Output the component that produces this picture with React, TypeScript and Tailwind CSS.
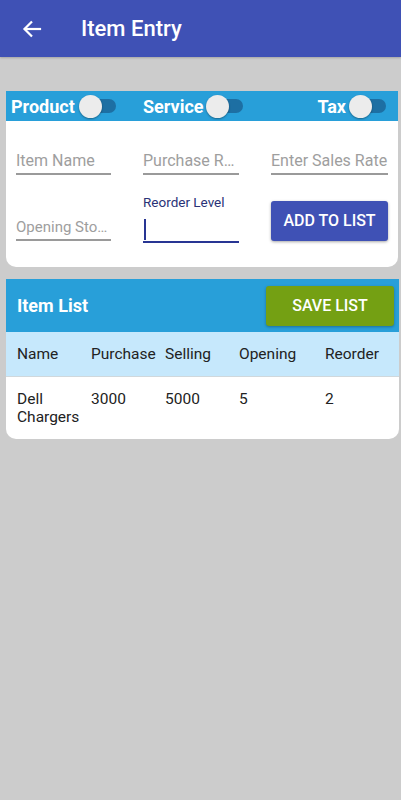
import React from "react";

function Toggle() {
  return (
    <div className="relative w-[37px] h-[23px] shrink-0">
      <div className="absolute left-[4px] right-0 top-[4.5px] h-[14px] rounded-full bg-[#1d6fa3]" />
      <div className="absolute left-0 top-0 w-[23px] h-[23px] rounded-full bg-[#ececec] shadow-[0_1px_2px_rgba(0,0,0,0.35)]" />
    </div>
  );
}

function Field({ text, w, small }: { text: string; w: string; small?: boolean }) {
  return (
    <div className={`${w} flex flex-col`}>
      <div
        className={`h-[24px] flex items-center ${small ? "text-[15px]" : "text-[16px]"} text-[#9e9e9e] leading-none whitespace-nowrap`}
      >
        {text}
      </div>
      <div className="h-[2px] bg-[#9a9a9a]" />
    </div>
  );
}

export default function App() {
  const cols = ["w-[74px]", "w-[74px]", "w-[74px]", "w-[86px]", "w-[60px]"];
  const head = ["Name", "Purchase", "Selling", "Opening", "Reorder"];
  const row = ["Dell\nChargers", "3000", "5000", "5", "2"];
  return (
    <div className="min-h-[800px] bg-[#cccccc]" style={{ fontFamily: "Roboto, 'Noto Sans', sans-serif" }}>
      <div className="h-[57px] bg-[#3f51b5] flex items-center shadow-[0_1px_2px_rgba(0,0,0,0.2)]">
        <svg className="ml-[22px]" width="20" height="20" viewBox="0 0 20 20" fill="none" stroke="white" strokeWidth="2.2" strokeLinecap="square">
          <path d="M18 10H3" />
          <path d="M10 2.5L2.5 10L10 17.5" strokeLinecap="butt" />
        </svg>
        <div className="ml-[39px] text-white text-[22px] font-medium">Item Entry</div>
      </div>

      <div className="ml-[6px] w-[392px] mt-[34px]">
        <div className="h-[30px] bg-[#289fd9] flex items-center pl-[5px]">
          <div className="flex items-center w-[132px]">
            <span className="text-white font-bold text-[18px] mr-[4px]">Product</span>
            <Toggle />
          </div>
          <div className="flex items-center">
            <span className="text-white font-bold text-[18px] mr-[2px]">Service</span>
            <Toggle />
          </div>
          <div className="flex items-center ml-auto mr-[12px]">
            <span className="text-white font-bold text-[18px] mr-[3px]">Tax</span>
            <Toggle />
          </div>
        </div>
        <div className="bg-white rounded-b-[10px] h-[146px] pl-[10px] pt-[28px]">
          <div className="flex gap-[32px]">
            <Field text="Item Name" w="w-[95px]" />
            <Field text="Purchase R…" w="w-[96px]" />
            <Field text="Enter Sales Rate" w="w-[117px]" />
          </div>
          <div className="flex gap-[32px] mt-[21px] items-end">
            <div className="mb-[2px]">
              <Field text="Opening Sto…" w="w-[95px]" small />
            </div>
            <div className="w-[96px] flex flex-col">
              <div className="text-[13.5px] text-[#2a3377] leading-[13px] whitespace-nowrap">Reorder Level</div>
              <div className="h-[24px] mt-[8px] flex items-center">
                <div className="w-[2px] h-[21px] bg-[#283593] ml-[1px]" />
              </div>
              <div className="h-[2px] bg-[#283593]" />
            </div>
            <div className="w-[117px] h-[40px] mb-[2px] rounded-[3px] bg-[#3f51b5] shadow-[0_1px_3px_rgba(0,0,0,0.35)] flex items-center justify-center text-white text-[16px] font-medium">
              ADD TO LIST
            </div>
          </div>
        </div>
      </div>

      <div className="ml-[6px] w-[393px] mt-[12px] rounded-b-[10px] overflow-hidden">
        <div className="h-[53px] bg-[#289fd9] flex items-center pl-[11px] pr-[5px]">
          <span className="text-white font-bold text-[18px]">Item List</span>
          <div className="ml-auto self-start mt-[7px] w-[128px] h-[40px] rounded-[3px] bg-[#74a013] shadow-[0_1px_3px_rgba(0,0,0,0.3)] flex items-center justify-center text-white text-[16px] font-medium">
            SAVE LIST
          </div>
        </div>
        <div className="h-[45px] bg-[#c6e8fc] flex items-center pl-[11px] pt-[2px] border-b border-[#d0d8dc] text-[15.5px] text-[#222222]">
          {head.map((h, i) => (
            <div key={h} className={`${cols[i]} whitespace-nowrap`}>{h}</div>
          ))}
        </div>
        <div className="h-[62px] bg-white flex pl-[11px] pt-[13px] text-[15.5px] text-[#222222] leading-[18px]">
          {row.map((c, i) => (
            <div key={i} className={`${cols[i]} whitespace-pre-line`}>{c}</div>
          ))}
        </div>
      </div>
    </div>
  );
}
